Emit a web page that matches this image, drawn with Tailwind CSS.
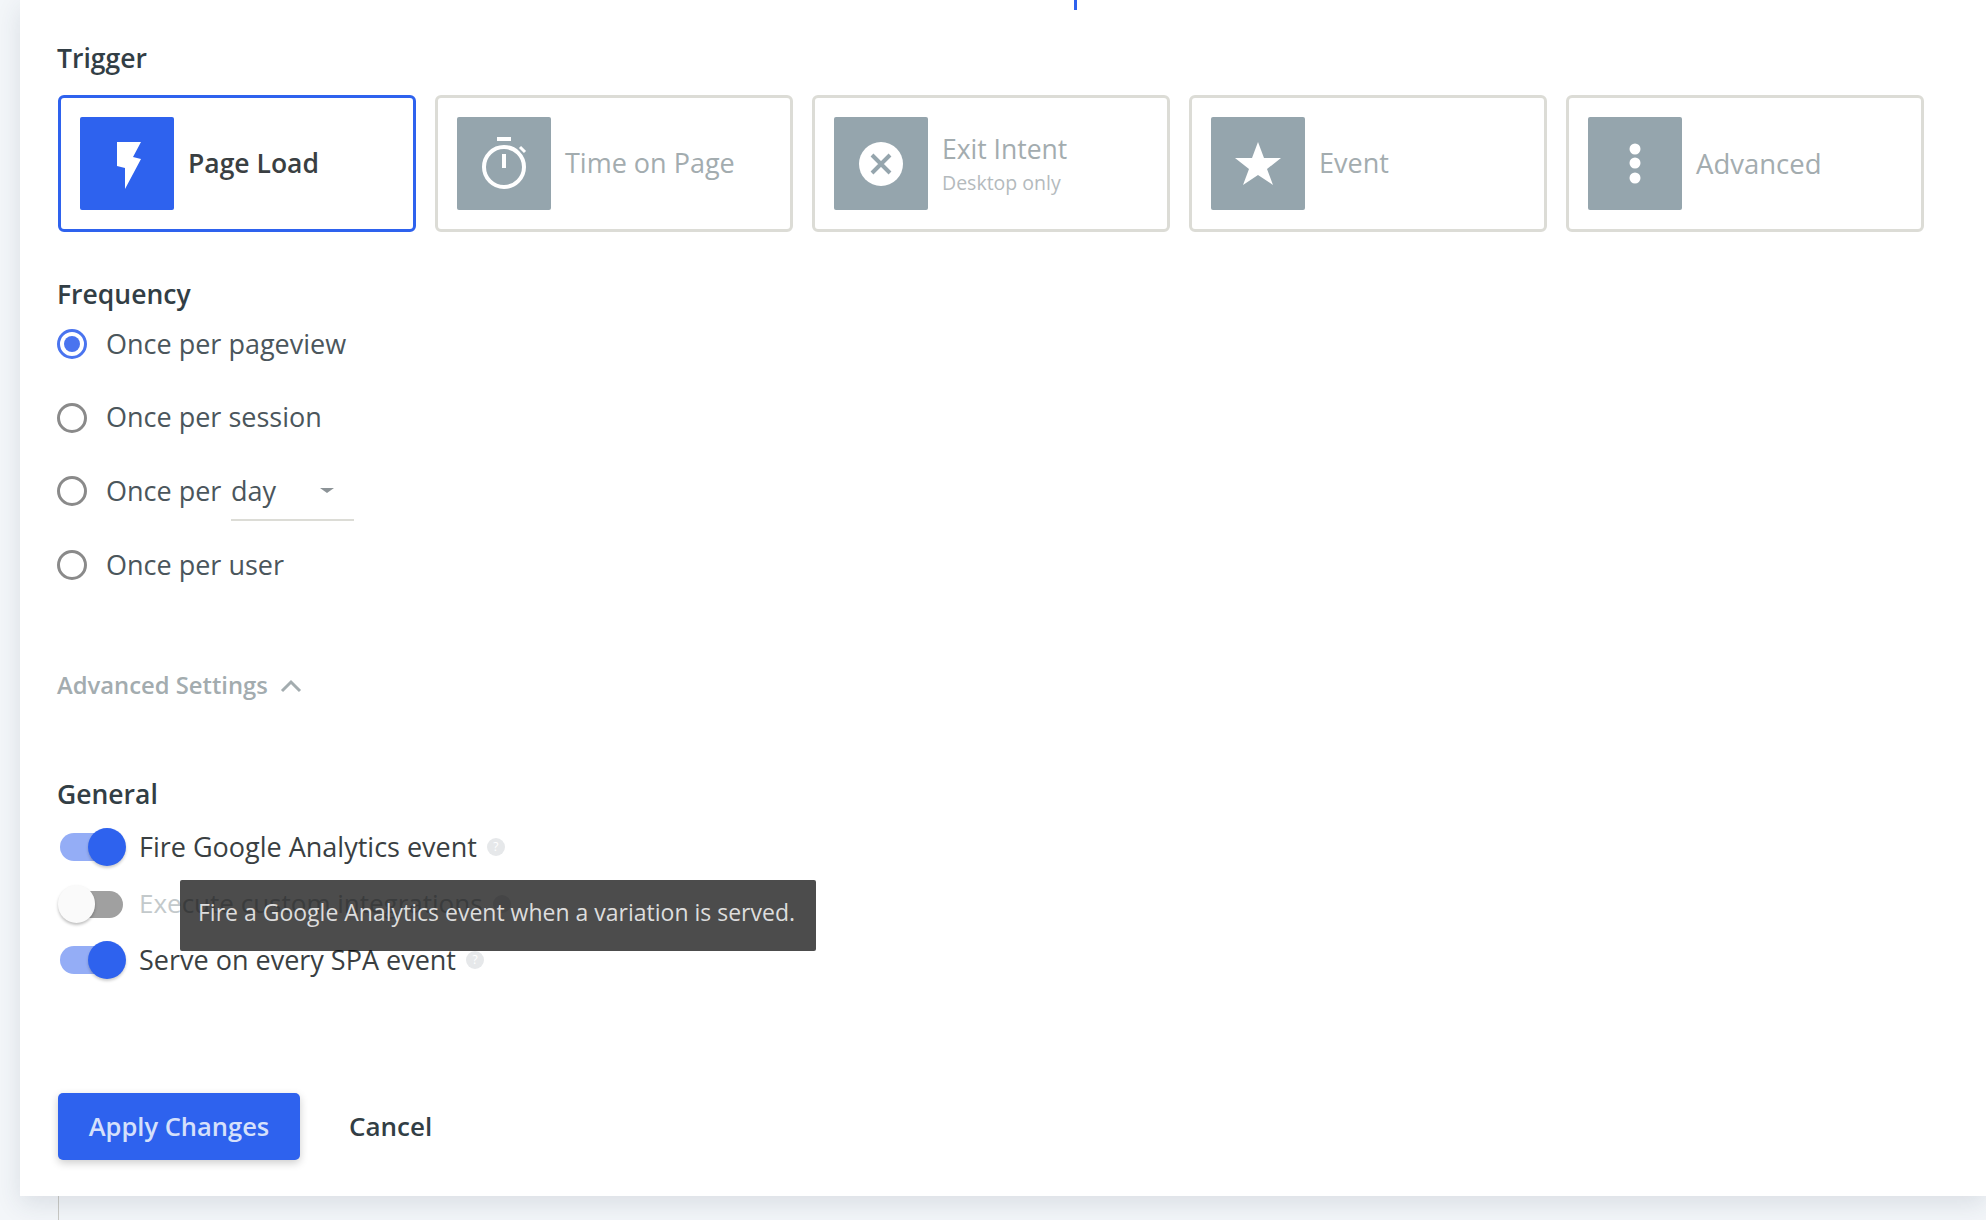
<!DOCTYPE html>
<html lang="en">
<head>
  <meta charset="UTF-8">
  <title>Trigger settings</title>
  <script src="https://cdn.jsdelivr.net/npm/@tailwindcss/browser@4"></script>
</head>
<body class="bg-[#f3f6f9] font-['Open_Sans','Liberation_Sans',sans-serif] overflow-hidden">
  <div class="h-[1220px] pl-[20px] relative">
    <div class="bg-white h-[1196px] pl-[37px] pt-[44px] shadow-[0_8px_24px_rgba(40,60,80,0.12)] relative">
      <div class="absolute left-[1054px] top-0 w-[3px] h-[10px] bg-[#2e62ee]"></div>

      <!-- trigger -->
      <h2 class="h-[30px] leading-[28px] text-[26.5px] font-semibold text-[#323e45]">Trigger</h2>
      <div class="flex gap-[19px] mt-[21px] ml-[1px]">
        <div class="w-[358px] h-[137px] border-[3px] border-[#2e62ee] rounded-[6px] pl-[19px] flex items-center gap-[14px]">
          <div class="w-[94px] h-[93px] bg-[#2e62ee] rounded-[2px] shrink-0">
            <svg width="94" height="93" viewBox="0 0 94 93"><polygon fill="#fff" points="37,25 61,25 53,40 61,42 45,72 45,51 37,49"/></svg>
          </div>
          <span class="text-[26.5px] font-semibold text-[#3a3f42]">Page Load</span>
        </div>
        <div class="w-[358px] h-[137px] border-[3px] border-[#dcdcd6] rounded-[6px] pl-[19px] flex items-center gap-[14px]">
          <div class="w-[94px] h-[93px] bg-[#95a5ad] rounded-[2px] shrink-0">
            <svg width="94" height="93" viewBox="0 0 94 93" fill="none" stroke="#fff"><circle cx="47" cy="50" r="20" stroke-width="4"/><path d="M40 22h14" stroke-width="4"/><path d="M47 37v14" stroke-width="4"/><path d="M63 30l5 5" stroke-width="3"/></svg>
          </div>
          <span class="text-[27px] text-[#a3acaf]">Time on Page</span>
        </div>
        <div class="w-[358px] h-[137px] border-[3px] border-[#dcdcd6] rounded-[6px] pl-[19px] flex items-center gap-[14px]">
          <div class="w-[94px] h-[93px] bg-[#95a5ad] rounded-[2px] shrink-0">
            <svg width="94" height="93" viewBox="0 0 94 93"><circle cx="47" cy="47" r="22" fill="#fff"/><path d="M38 38l18 18M56 38L38 56" stroke="#95a5ad" stroke-width="4"/></svg>
          </div>
          <div class="flex flex-col">
            <span class="text-[26.5px] leading-[34px] text-[#a3acaf]">Exit Intent</span>
            <span class="text-[19.5px] leading-[26px] mt-[4px] text-[#b4babd]">Desktop only</span>
          </div>
        </div>
        <div class="w-[358px] h-[137px] border-[3px] border-[#dcdcd6] rounded-[6px] pl-[19px] flex items-center gap-[14px]">
          <div class="w-[94px] h-[93px] bg-[#95a5ad] rounded-[2px] shrink-0">
            <svg width="94" height="93" viewBox="0 0 94 93"><polygon fill="#fff" points="47,25 53,41 70,41 56,52 62,68 47,58 32,68 38,52 24,41 41,41"/></svg>
          </div>
          <span class="text-[27px] text-[#a3acaf]">Event</span>
        </div>
        <div class="w-[358px] h-[137px] border-[3px] border-[#dcdcd6] rounded-[6px] pl-[19px] flex items-center gap-[14px]">
          <div class="w-[94px] h-[93px] bg-[#95a5ad] rounded-[2px] shrink-0">
            <svg width="94" height="93" viewBox="0 0 94 93" fill="#fff"><circle cx="47" cy="32" r="5.5"/><circle cx="47" cy="46" r="5.5"/><circle cx="47" cy="61" r="5.5"/></svg>
          </div>
          <span class="text-[27.5px] text-[#a3acaf]">Advanced</span>
        </div>
      </div>

      <!-- frequency -->
      <h2 class="h-[30px] leading-[30px] mt-[47px] text-[26.5px] font-semibold text-[#323e45]">Frequency</h2>
      <div class="flex flex-col gap-[43.7px] mt-[20px] text-[27px] text-[#4b565c]">
        <label class="h-[30px] flex items-center gap-[19px]">
          <span class="w-[30px] h-[30px] rounded-full border-[3px] border-[#4a74ef] flex items-center justify-center"><span class="w-[16px] h-[16px] rounded-full bg-[#4a74ef]"></span></span>
          <span>Once per pageview</span>
        </label>
        <label class="h-[30px] flex items-center gap-[19px]">
          <span class="w-[30px] h-[30px] rounded-full border-[3px] border-[#8a8a8a]"></span>
          <span>Once per session</span>
        </label>
        <label class="h-[30px] flex items-center gap-[19px]">
          <span class="w-[30px] h-[30px] rounded-full border-[3px] border-[#8a8a8a]"></span>
          <span class="w-[125px] whitespace-nowrap">Once per</span>
          <span class="ml-[-19px] w-[123px] h-[60px] border-b-2 border-[#dcdcd6] flex justify-between pr-[20px] pt-[15px] leading-[30px]">
            <span>day</span>
            <span class="w-0 h-0 mt-[12px] border-x-[7px] border-x-transparent border-t-[5px] border-t-[#8c9397]"></span>
          </span>
        </label>
        <label class="h-[30px] flex items-center gap-[19px]">
          <span class="w-[30px] h-[30px] rounded-full border-[3px] border-[#8a8a8a]"></span>
          <span>Once per user</span>
        </label>
      </div>

      <!-- advanced -->
      <div class="h-[30px] mt-[91px] flex items-center gap-[12px] text-[23.8px] font-semibold text-[#a3acaf]">
        <span>Advanced Settings</span>
        <svg width="22" height="14" viewBox="0 0 22 14" fill="none" stroke="#a3acaf" stroke-width="3"><path d="M2 12l9-9 9 9"/></svg>
      </div>

      <!-- general -->
      <h2 class="h-[30px] leading-[30px] mt-[78px] text-[26.5px] font-semibold text-[#323e45]">General</h2>
      <div class="flex flex-col gap-[18.5px] mt-[19px] ml-[1px] text-[27px] relative">
        <div class="h-[38px] flex items-center gap-[13px] text-[#3a3f42]">
          <span class="relative w-[68px] h-[38px] shrink-0">
            <span class="absolute left-[2px] right-[2px] top-[5px] h-[28px] rounded-full bg-[#94adf6]"></span>
            <span class="absolute right-0 top-0 w-[38px] h-[38px] rounded-full bg-[#2e62ee] shadow-[0_2px_3px_rgba(0,0,0,0.2)]"></span>
          </span>
          <span>Fire Google Analytics event</span>
          <span class="ml-[-3px] w-[18px] h-[18px] rounded-full bg-[#e6e8ea] text-[12px] leading-[18px] text-center text-white">?</span>
        </div>
        <div class="h-[38px] flex items-center gap-[13px] text-[#c3c9cb]">
          <span class="relative w-[68px] h-[38px] shrink-0">
            <span class="absolute left-[2px] right-[3px] top-[6px] h-[27px] rounded-full bg-[#a0a0a0]"></span>
            <span class="absolute left-0 top-0 w-[37px] h-[38px] rounded-full bg-[#fafafa] shadow-[0_2px_3px_rgba(0,0,0,0.25)]"></span>
          </span>
          <span class="text-[26px]">Execute custom integrations</span>
          <span class="ml-[-3px] w-[18px] h-[18px] rounded-full bg-[#e6e8ea]"></span>
        </div>
        <div class="h-[38px] flex items-center gap-[13px] text-[#3a3f42]">
          <span class="relative w-[68px] h-[38px] shrink-0">
            <span class="absolute left-[2px] right-[2px] top-[5px] h-[28px] rounded-full bg-[#94adf6]"></span>
            <span class="absolute right-0 top-0 w-[38px] h-[38px] rounded-full bg-[#2e62ee] shadow-[0_2px_3px_rgba(0,0,0,0.2)]"></span>
          </span>
          <span>Serve on every SPA event</span>
          <span class="ml-[-3px] w-[18px] h-[18px] rounded-full bg-[#e6e8ea] text-[12px] leading-[18px] text-center text-white">?</span>
        </div>
        <div class="absolute left-[122px] top-[52px] w-[636px] h-[71px] bg-black/70 rounded-[2px] pl-[18px] pt-[17px] text-[23px] leading-[30px] text-[#dddddd] whitespace-nowrap">Fire a Google Analytics event when a variation is served.</div>
      </div>

      <!-- buttons -->
      <div class="flex items-center gap-[49px] mt-[114px] ml-[1px]">
        <button class="w-[242px] h-[67px] rounded-[5px] bg-[#2e62ee] text-[25.5px] font-semibold text-[#d5e0fb] shadow-[0_3px_8px_rgba(0,0,0,0.2)]">Apply Changes</button>
        <button class="text-[26px] font-semibold text-[#323e45]">Cancel</button>
      </div>
    </div>
    <div class="w-[1px] h-[24px] ml-[38px] bg-[#c9c9c4]"></div>
  </div>
</body>
</html>
